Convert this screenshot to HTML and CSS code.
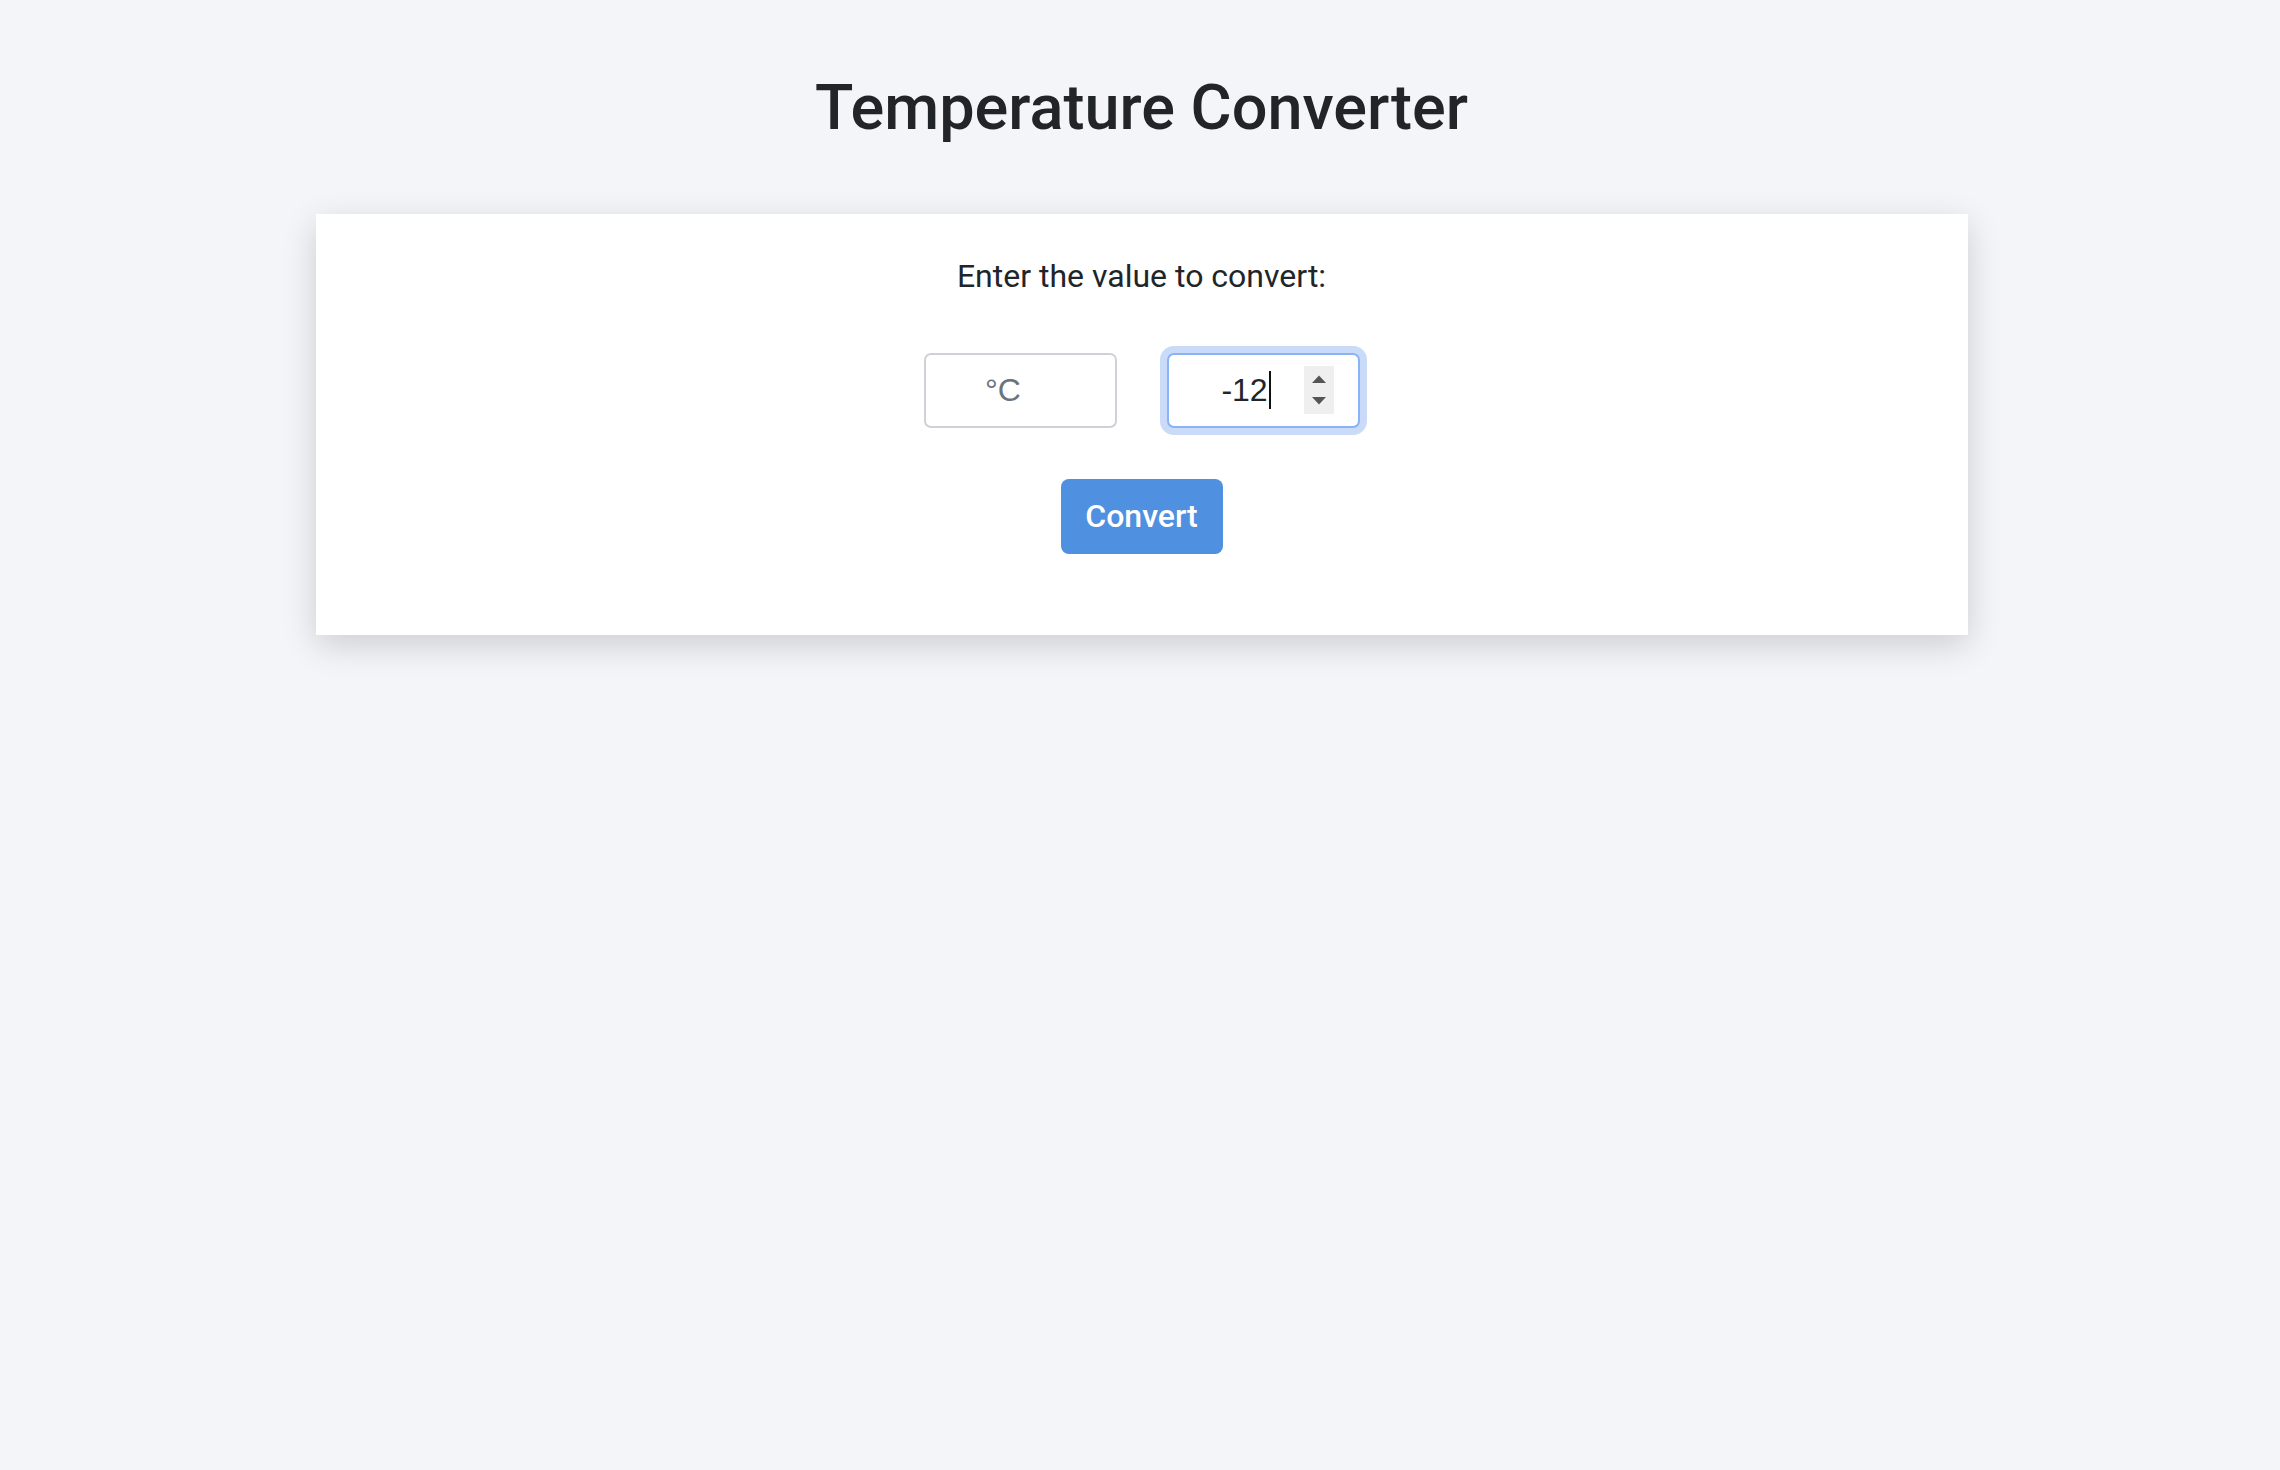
FILE: index.html
```html
<!DOCTYPE html>
<html lang="en">
<head>
<meta charset="utf-8">
<title>Temperature Converter</title>
<link rel="stylesheet" href="styles.css">
</head>
<body>
  <h1 class="title">Temperature Converter</h1>
  <main class="card">
    <label class="prompt">Enter the value to convert:</label>
    <div class="fields">
      <div class="field">
        <span class="field-text placeholder">°C</span>
        <span class="spin-space"></span>
      </div>
      <div class="field focused">
        <span class="field-text">-12<span class="caret"></span></span>
        <span class="spin">
          <svg width="14" height="30" viewBox="0 0 14 30" aria-hidden="true">
            <path d="M0 8 L7 0.5 L14 8 Z" fill="#555"/>
            <path d="M0 22 L7 29.5 L14 22 Z" fill="#555"/>
          </svg>
        </span>
      </div>
    </div>
    <button class="convert">Convert</button>
  </main>
</body>
</html>
```

FILE: styles.css
```css
html, body {
  margin: 0;
  padding: 0;
}

body {
  background: #f4f5f9;
  font-family: Roboto, "Liberation Sans", Arial, sans-serif;
  color: #212529;
  min-height: 1470px;
  padding-left: 3px;
}

.title {
  margin: 0;
  padding-top: 70px;
  font-size: 63px;
  font-weight: 500;
  line-height: 75px;
  text-align: center;
  color: #212529;
}

.card {
  box-sizing: border-box;
  width: 1652px;
  margin: 69px auto 0;
  padding: 44px 0 81px;
  background: #ffffff;
  box-shadow: 0 10px 32px rgba(0, 0, 0, 0.16);
  display: flex;
  flex-direction: column;
  align-items: center;
}

.prompt {
  font-size: 32px;
  line-height: 37.5px;
  color: #212529;
}

.fields {
  margin-top: 57px;
  display: flex;
  gap: 50px;
}

.field {
  box-sizing: border-box;
  width: 193px;
  height: 75px;
  border: 2px solid #ced2d7;
  border-radius: 7px;
  background: #fff;
  display: flex;
  align-items: center;
  padding: 0 24px 0 20px;
}

.field.focused {
  border-color: #8ab3f3;
  box-shadow: 0 0 0 7px #c9dbf9;
}

.field-text {
  flex: 1;
  text-align: center;
  font-family: "Liberation Sans", Arial, sans-serif;
  font-size: 32px;
  line-height: 38px;
  color: #212529;
}

.field-text.placeholder {
  color: #6c737a;
}

.caret {
  display: inline-block;
  width: 2px;
  height: 38px;
  margin-left: 1px;
  background: #111;
  vertical-align: -8px;
}

.spin,
.spin-space {
  width: 30px;
  height: 48px;
  flex: none;
}

.spin {
  background: #efefef;
  display: flex;
  align-items: center;
  justify-content: center;
}

.convert {
  margin-top: 51px;
  width: 162px;
  height: 75px;
  border: none;
  border-radius: 8px;
  background: #5090e0;
  color: #ffffff;
  font-family: Roboto, "Liberation Sans", Arial, sans-serif;
  font-size: 32px;
  font-weight: 500;
  padding: 0;
}
```
